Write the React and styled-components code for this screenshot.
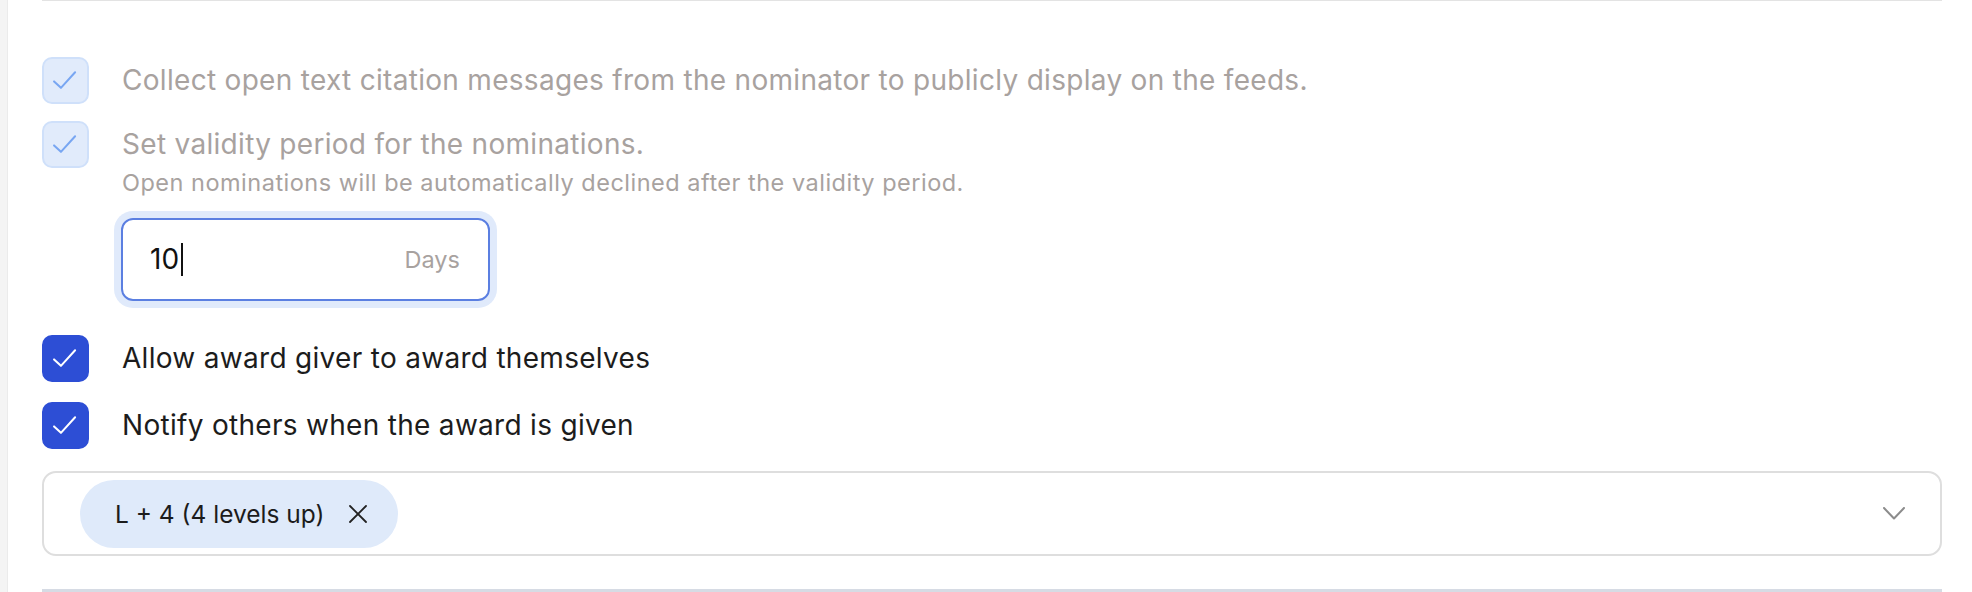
import React from 'react';
import styled, { createGlobalStyle } from 'styled-components';

const GlobalStyle = createGlobalStyle`
  html, body {
    margin: 0;
    padding: 0;
    background: #ffffff;
    font-family: 'Inter', 'Noto Sans', sans-serif;
    -webkit-font-smoothing: antialiased;
  }
`;

const Page = styled.div`
  display: flex;
  min-height: 592px;
  height: 592px;
  overflow: hidden;
`;

const SideStrip = styled.div`
  width: 7px;
  background: #f4f4f4;
  border-right: 1px solid #ebebeb;
`;

const Content = styled.div`
  flex: 1;
  display: flex;
  flex-direction: column;
  padding: 0 30px 0 34px;
`;

const Rule = styled.div`
  height: ${(p) => p.$h || 1}px;
  background: ${(p) => p.$color || '#e3e3e3'};
  margin-top: ${(p) => p.$top || 0}px;
`;

const Row = styled.div`
  display: flex;
  align-items: flex-start;
  gap: 33px;
  margin-top: ${(p) => p.$top}px;
`;

const Box = styled.div`
  flex: none;
  width: 47px;
  height: 47px;
  box-sizing: border-box;
  border-radius: 10px;
  display: flex;
  align-items: center;
  justify-content: center;
  background: ${(p) => (p.$muted ? '#e1ebfb' : '#2d4ed5')};
  border: 2px solid ${(p) => (p.$muted ? '#cfe0fa' : '#2d4ed5')};
`;

const Label = styled.div`
  display: flex;
  flex-direction: column;
`;

const Title = styled.div`
  font-size: 28px;
  line-height: 47px;
  letter-spacing: 0.3px;
  color: ${(p) => (p.$muted ? '#a8a29f' : '#1c1c1c')};
`;

const Hint = styled.div`
  font-size: 23.5px;
  line-height: 30px;
  margin-top: 0;
  letter-spacing: 0.5px;
  color: #a8a29f;
`;

const Field = styled.div`
  margin-top: 20px;
  margin-left: -1px;
  width: 369px;
  height: 83px;
  box-sizing: border-box;
  border: 2px solid #5b7fe1;
  border-radius: 12px;
  box-shadow: 0 0 0 7px #e0eafb;
  display: flex;
  align-items: center;
  padding: 0 28px 0 27px;
`;

const Value = styled.span`
  font-size: 28px;
  color: #111;
  display: flex;
  align-items: center;
`;

const Caret = styled.span`
  display: inline-block;
  width: 2px;
  height: 33px;
  background: #111;
  margin-left: 2px;
`;

const Unit = styled.span`
  margin-left: auto;
  font-size: 23.5px;
  color: #a8a29f;
`;

const Select = styled.div`
  margin-top: 22px;
  height: 86px;
  box-sizing: border-box;
  border: 2px solid #dedede;
  border-radius: 14px;
  display: flex;
  align-items: center;
  justify-content: space-between;
  padding: 0 35px 0 36px;
`;

const Chip = styled.div`
  height: 68px;
  border-radius: 34px;
  background: #dfeafa;
  display: flex;
  align-items: center;
  gap: 24px;
  padding: 0 30px 0 35px;
  font-size: 24.5px;
  color: #1c1c1c;
`;

const Check = ({ muted }) => (
  <svg width="47" height="47" viewBox="0 0 47 47" fill="none">
    <path
      d="M11 24.5 L18.5 31.5 L34 14.5"
      stroke={muted ? '#78a6f2' : '#ffffff'}
      strokeWidth="2.2"
      strokeLinecap="round"
      strokeLinejoin="round"
    />
  </svg>
);

const CheckRow = ({ top, muted, title, hint, children }) => (
  <Row $top={top}>
    <Box $muted={muted}>
      <Check muted={muted} />
    </Box>
    <Label>
      <Title $muted={muted}>{title}</Title>
      {hint && <Hint>{hint}</Hint>}
      {children}
    </Label>
  </Row>
);

export default function App() {
  return (
    <Page>
      <GlobalStyle />
      <SideStrip />
      <Content>
        <Rule />
        <CheckRow
          top={56}
          muted
          title="Collect open text citation messages from the nominator to publicly display on the feeds."
        />
        <CheckRow
          top={17}
          muted
          title="Set validity period for the nominations."
          hint="Open nominations will be automatically declined after the validity period."
        >
          <Field>
            <Value>
              10
              <Caret />
            </Value>
            <Unit>Days</Unit>
          </Field>
        </CheckRow>
        <CheckRow top={34} title="Allow award giver to award themselves" />
        <CheckRow top={20} title="Notify others when the award is given" />
        <Select>
          <Chip>
            L + 4 (4 levels up)
            <svg width="20" height="20" viewBox="0 0 20 20" fill="none">
              <path d="M2 2 L18 18 M18 2 L2 18" stroke="#222" strokeWidth="1.8" strokeLinecap="round" />
            </svg>
          </Chip>
          <svg width="22" height="13" viewBox="0 0 22 13" fill="none">
            <path d="M1 1 L11 11.5 L21 1" stroke="#8c8c8c" strokeWidth="2" strokeLinecap="round" strokeLinejoin="round" />
          </svg>
        </Select>
        <Rule $top={33} $h={3} $color="#d6dbe4" />
      </Content>
    </Page>
  );
}
